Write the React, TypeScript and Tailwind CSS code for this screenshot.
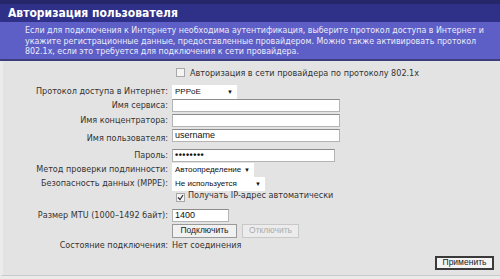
import React from "react";

const font = { fontFamily: '"DejaVu Sans Condensed", "Liberation Sans", sans-serif' };
const ctrl = { fontFamily: '"Liberation Sans", Arial, sans-serif' };

function Check({ checked }: { checked?: boolean }) {
  return (
    <span className="inline-flex h-[9px] w-[9px] shrink-0 items-center justify-center border border-[#a8a8a8] bg-[#f4f4f4]">
      {checked && (
        <svg width="7" height="7" viewBox="0 0 7 7">
          <path d="M1 3.5 L3 5.5 L6 1" stroke="#333" strokeWidth="1.2" fill="none" />
        </svg>
      )}
    </span>
  );
}

function Select({ value, width }: { value: string; width: string }) {
  return (
    <div
      className={`flex h-[14px] items-center justify-between bg-white pl-[3px] pr-[4px] text-[8px] text-[#111] ${width}`}
      style={ctrl}
    >
      <span className="whitespace-nowrap">{value}</span>
      <span className="ml-[2px] shrink-0 text-[6px] leading-none">▼</span>
    </div>
  );
}

function Input({ value, width, dots }: { value?: string; width: string; dots?: boolean }) {
  return (
    <div
      className={`flex h-[13px] items-center border border-[#b4b4b4] border-t-[#8c8c8c] bg-white pl-[2px] text-[9px] text-[#111] ${width}`}
      style={ctrl}
    >
      {dots ? <span className="text-[9px] font-bold tracking-[0.5px]">••••••••</span> : value}
    </div>
  );
}

function Row({
  label,
  children,
  h = "h-[14px]",
  labelClass = "",
}: {
  label?: string;
  children: React.ReactNode;
  h?: string;
  labelClass?: string;
}) {
  return (
    <div className={`flex shrink-0 items-center ${h}`}>
      <div className={`w-[171px] pr-[3px] text-right text-[#333] ${labelClass}`}>{label}</div>
      <div className="flex items-center gap-[5px] pl-[1px]">{children}</div>
    </div>
  );
}

export default function App() {
  return (
    <div className="flex h-[279px] w-[500px] flex-col bg-[#e3e3e3] text-[9px] leading-[11px]" style={font}>
      {/* Header */}
      <div className="h-[4px] shrink-0 bg-[#26276a]" />
      <div className="flex h-[18px] shrink-0 items-center bg-[#2f3188] pl-[8px] text-[12px] font-bold text-white">
        Авторизация пользователя
      </div>
      <div className="shrink-0 border-b-2 border-[#3d3e7c] bg-[#5d5fc6] px-[25px] pt-[3px] pb-[2px] text-[8.8px] leading-[10.5px] whitespace-nowrap text-[#ececfa]">
        Если для подключения к Интернету необходима аутентификация, выберите протокол доступа в Интернет и
        <br />
        укажите регистрационные данные, предоставленные провайдером. Можно также активировать протокол
        <br />
        802.1x, если это требуется для подключения к сети провайдера.
      </div>

      {/* Body */}
      <div className="flex h-[215px] shrink-0 flex-col border-b border-l-[3px] border-b-[#c9c9c9] border-l-[#ebebeb] pt-[6px]">
        <div className="-ml-[3px] flex flex-col">
          <Row>
            <span className="ml-[4px]">
              <Check />
            </span>
            <span className="text-[#333]">Авторизация в сети провайдера по протоколу 802.1x</span>
          </Row>
          <div className="h-[4px] shrink-0" />
          <Row label="Протокол доступа в Интернет:">
            <Select value="PPPoE" width="w-[65px]" />
          </Row>
          <Row label="Имя сервиса:">
            <Input width="w-[168px]" />
          </Row>
          <Row label="Имя концентратора:" h="h-[16px]">
            <Input width="w-[168px]" />
          </Row>
          <Row label="Имя пользователя:" labelClass="mt-[5px]">
            <Input value="username" width="w-[168px]" />
          </Row>
          <div className="h-[6px] shrink-0" />
          <Row label="Пароль:">
            <Input dots width="w-[163px]" />
          </Row>
          <Row label="Метод проверки подлинности:">
            <Select value="Автоопределение" width="w-[82px]" />
          </Row>
          <Row label="Безопасность данных (MPPE):">
            <Select value="Не используется" width="w-[93px]" />
          </Row>
          <Row h="h-[12px]">
            <span className="ml-[4px] mt-[3px]">
              <Check checked />
            </span>
            <span className="-ml-[2px] -mt-[2px] text-[#333]">Получать IP-адрес автоматически</span>
          </Row>
          <div className="h-[6px] shrink-0" />
          <Row label="Размер MTU (1000–1492 байт):">
            <Input value="1400" width="w-[57px]" />
          </Row>
          <Row h="h-[16px]">
            <button
              className="h-[14px] w-[65px] border border-[#9a9a9a] bg-[#f1f1f1] text-[8.5px] leading-none text-[#222]"
              style={ctrl}
            >
              Подключить
            </button>
            <button
              disabled
              className="h-[14px] w-[57px] border border-[#c8c8c8] bg-[#ececec] text-[8.5px] leading-none text-[#ababab]"
              style={ctrl}
            >
              Отключить
            </button>
          </Row>
          <Row label="Состояние подключения:">
            <span className="text-[#333]">Нет соединения</span>
          </Row>
        </div>
        <div className="flex flex-1 items-end justify-end pr-[6px] pb-[5px]">
          <button
            className="h-[14px] w-[59px] border-2 border-[#3a3a3a] bg-[#f4f4f4] text-[8.5px] leading-none text-[#222]"
            style={ctrl}
          >
            Применить
          </button>
        </div>
      </div>
      <div className="flex-1 bg-[#ebebeb]" />
    </div>
  );
}
